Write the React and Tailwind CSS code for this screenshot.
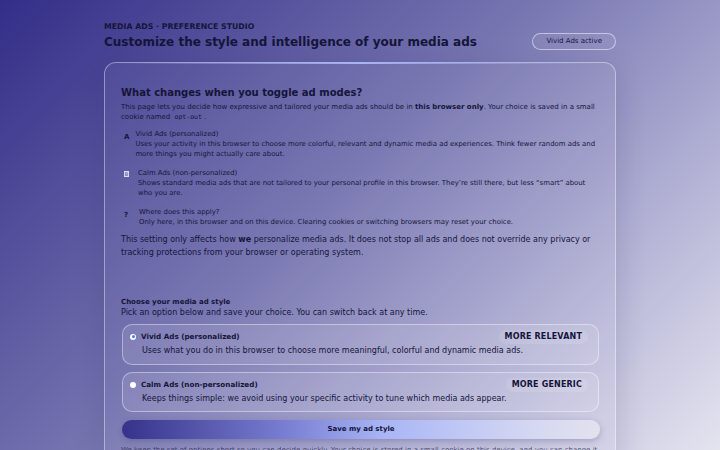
import React from "react";

export default function App() {
  const font = { fontFamily: '"DejaVu Sans", sans-serif' };
  return (
    <div
      className="w-[720px] h-[450px] overflow-hidden bg-[linear-gradient(135deg,#332e88_0%,#7674b0_45%,#b4b3d6_75%,#e4e4ef_100%)] text-[#15153a]"
      style={font}
    >
      <div className="w-[512px] mx-auto pt-[22px]">
        <div className="flex items-end justify-between">
          <div>
            <div className="text-[7.8px] font-bold uppercase leading-[10px]">
              Media Ads · Preference Studio
            </div>
            <h1 className="text-[12px] font-bold leading-[20px] mt-[0px]">
              Customize the style and intelligence of your media ads
            </h1>
          </div>
          <div className="mb-[2px] rounded-full border border-white/50 px-[13px] h-[17px] flex items-center text-[7px] bg-white/5">
            Vivid Ads active
          </div>
        </div>

        <div className="relative mt-[10px] rounded-[12px] border border-white/40 bg-white/[0.04] px-[16px] pt-[23px] pb-[20px] shadow-[0_8px_30px_rgba(20,20,60,0.15)]">
          <div className="absolute left-[12px] right-[12px] top-[-1px] h-[2px] bg-[linear-gradient(90deg,transparent,#a9b4f5_50%,transparent)]" />
          <h2 className="text-[10px] font-bold leading-[14px]">What changes when you toggle ad modes?</h2>
          <p className="text-[7px] leading-[10px] mt-[2px]">
            This page lets you decide how expressive and tailored your media ads should be in <b>this browser only</b>. Your choice is saved in a small cookie named{" "}
            <code className="font-['DejaVu_Sans_Mono'] text-[6.5px] px-[2px]">opt-out</code>.
          </p>

          <div className="mt-[7px] flex flex-col gap-[9px] text-[6.9px] leading-[10px]">
            <div className="flex">
              <div className="w-[18px] pl-[3px] pt-[3px] font-bold text-[7px]">A</div>
              <div>
                <div>Vivid Ads (personalized)</div>
                <div>Uses your activity in this browser to choose more colorful, relevant and dynamic media ad experiences. Think fewer random ads and more things you might actually care about.</div>
              </div>
            </div>
            <div className="flex">
              <div className="w-[18px] pl-[3px] pt-[3px]">
                <div className="w-[5px] h-[6px] bg-white/80 text-[5px] leading-[6px] text-center text-[#8080c0] font-bold">B</div>
              </div>
              <div>
                <div>Calm Ads (non-personalized)</div>
                <div>Shows standard media ads that are not tailored to your personal profile in this browser. They’re still there, but less “smart” about who you are.</div>
              </div>
            </div>
            <div className="flex">
              <div className="w-[18px] pl-[3px] pt-[3px] font-bold text-[7px]">?</div>
              <div>
                <div>Where does this apply?</div>
                <div>Only here, in this browser and on this device. Clearing cookies or switching browsers may reset your choice.</div>
              </div>
            </div>
          </div>

          <p className="mt-[6px] text-[8px] leading-[13px]">
            This setting only affects how <b>we</b> personalize media ads. It does not stop all ads and does not override any privacy or tracking protections from your browser or operating system.
          </p>

          <div className="mt-[38px]">
            <div className="text-[7px] font-bold leading-[10px]">Choose your media ad style</div>
            <div className="text-[8px] leading-[12px]">Pick an option below and save your choice. You can switch back at any time.</div>
          </div>

          <div className="mt-[5px] flex flex-col gap-[7px] pl-[1px]">
            <div className="rounded-[10px] border border-white/40 bg-white/10 pl-[7px] pr-[10px] pt-[5px] pb-[7px]">
              <div className="flex items-center justify-between">
                <div className="flex items-center gap-[5px]">
                  <div className="w-[6px] h-[6px] rounded-full bg-white flex items-center justify-center">
                    <div className="w-[3px] h-[3px] rounded-full bg-[#3b82f6]" />
                  </div>
                  <span className="text-[7.2px] font-bold">Vivid Ads (personalized)</span>
                </div>
                <span className="rounded-full bg-white/10 px-[6px] h-[14px] flex items-center text-[8px] font-bold tracking-[0.02em]">MORE RELEVANT</span>
              </div>
              <div className="pl-[12px] text-[8px] leading-[12px] mt-[1px]">
                Uses what you do in this browser to choose more meaningful, colorful and dynamic media ads.
              </div>
            </div>
            <div className="rounded-[10px] border border-white/40 bg-white/10 pl-[7px] pr-[10px] pt-[5px] pb-[6px]">
              <div className="flex items-center justify-between">
                <div className="flex items-center gap-[5px]">
                  <div className="w-[6px] h-[6px] rounded-full bg-white" />
                  <span className="text-[7.2px] font-bold">Calm Ads (non-personalized)</span>
                </div>
                <span className="rounded-full bg-white/10 px-[6px] h-[14px] flex items-center text-[8px] font-bold tracking-[0.02em]">MORE GENERIC</span>
              </div>
              <div className="pl-[12px] text-[8px] leading-[12px] mt-[1px]">
                Keeps things simple: we avoid using your specific activity to tune which media ads appear.
              </div>
            </div>
          </div>

          <button className="mt-[8px] ml-[1px] w-[478px] h-[19px] rounded-[10px] bg-[linear-gradient(90deg,#36328a_0%,#7a80d4_35%,#a9b6f6_55%,#d4d7f2_85%,#e2e2ee_100%)] shadow-[0_2px_6px_rgba(40,40,90,0.25)] text-[7px] font-bold text-[#15153a]">
            Save my ad style
          </button>

          <p className="mt-[6px] text-[7px] leading-[10px] text-[#15153a]/70">
            We keep the set of options short so you can decide quickly. Your choice is stored in a small cookie on this device, and you can change it again whenever you like.
          </p>
        </div>
      </div>
    </div>
  );
}
